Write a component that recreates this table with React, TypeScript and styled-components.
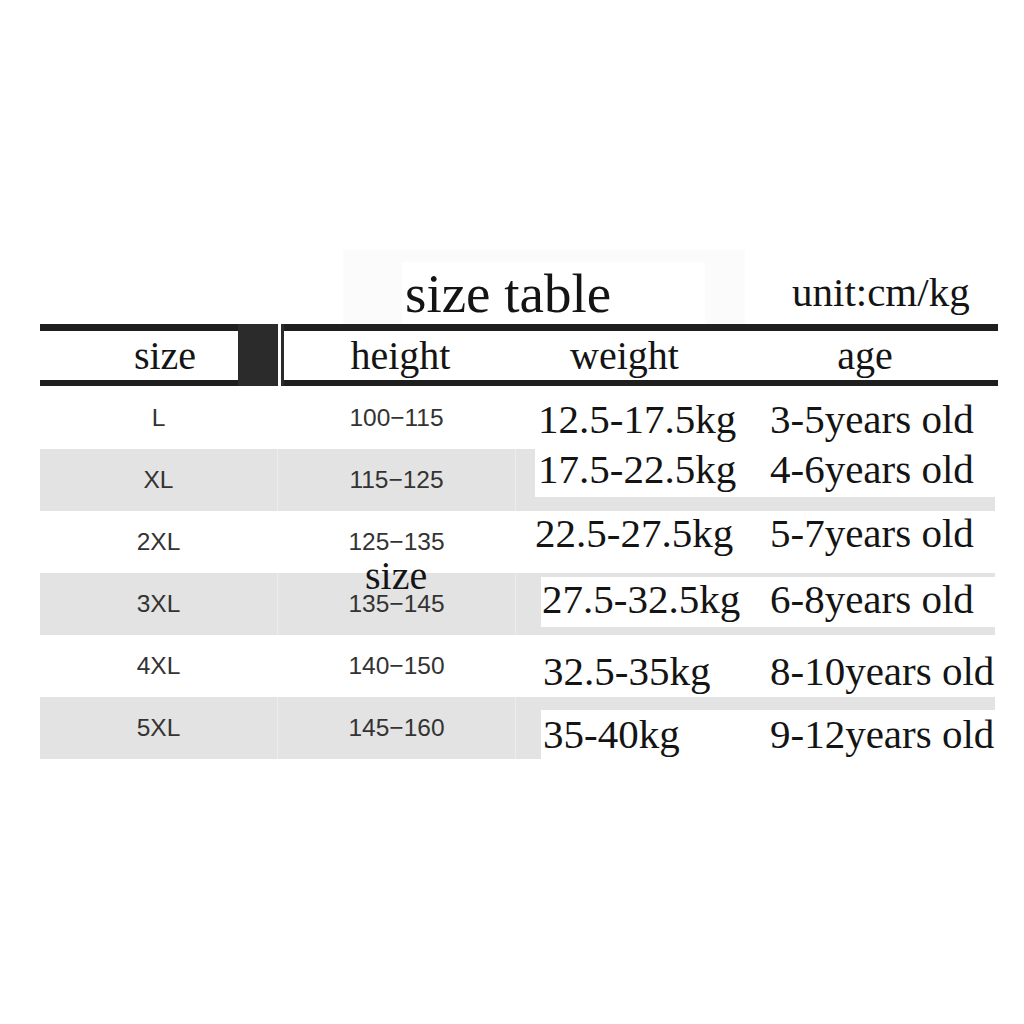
import React from 'react';
import styled, { createGlobalStyle } from 'styled-components';

// palette
const ink = '#141414';
const rule = '#1f1f1f';
const block = '#2b2b2b';
const band = '#e3e3e3';
const bandSeam = '#ececec';
const sansInk = '#333333';

const GlobalStyle = createGlobalStyle`
  html, body {
    margin: 0;
    padding: 0;
    background: #ffffff;
  }
`;

const Page = styled.div`
  width: 1024px;
  height: 1024px;
  background: #ffffff;
  overflow: hidden;
`;

const Sheet = styled.div`
  margin-left: 40px;
  padding-top: 250px;
  width: 958px;
`;

const TitleBar = styled.div`
  display: flex;
  height: 74px;
`;

const TitleBlock = styled.div`
  margin-left: 303px;
  width: 402px;
  height: 74px;
  background: #fbfbfb;
  display: flex;
  align-items: flex-end;
  padding-left: 59px;
  box-sizing: border-box;
`;

const TitleBox = styled.div`
  width: 303px;
  height: 62px;
  background: #ffffff;
  box-sizing: border-box;
  padding: 5px 0 0 3px;
  font-family: 'Liberation Serif', serif;
  font-size: 55px;
  line-height: 54px;
  color: ${ink};
`;

const Unit = styled.div`
  margin-left: 47px;
  padding-top: 22px;
  font-family: 'Liberation Serif', serif;
  font-size: 41px;
  line-height: 40px;
  color: ${ink};
`;

const HeaderRow = styled.div`
  display: grid;
  grid-template-columns: 198px 40px 3px 3px 233px 215px 1fr;
  border-top: 7px solid ${rule};
  border-bottom: 6px solid ${rule};
  height: 49px;
`;

const HeadCell = styled.div<{ $shift?: number }>`
  font-family: 'Liberation Serif', serif;
  font-size: 40px;
  line-height: 49px;
  color: ${ink};
  text-align: center;
  padding-left: ${p => p.$shift || 0}px;
`;

const DarkBlock = styled.div<{ $w?: boolean }>`
  background: ${p => (p.$w ? '#ffffff' : block)};
  margin: -7px 0 -6px;
`;

const Body = styled.div`
  position: relative;
  width: 955px;
`;

const Row = styled.div`
  display: grid;
  grid-template-columns: 238px 238px 1fr;
  height: 62px;
  &:first-child {
    margin-top: 1px;
  }
`;

const Cell = styled.div<{ $band: boolean; $seam?: boolean }>`
  display: flex;
  align-items: center;
  justify-content: center;
  background: ${p => (p.$band ? band : 'transparent')};
  border-right: 1px solid ${p => (p.$band && p.$seam ? bandSeam : 'transparent')};
  font-family: 'Liberation Sans', Arial, sans-serif;
  font-size: 24.5px;
  color: ${sansInk};
`;

const Tail = styled.div<{ $band: boolean }>`
  display: flex;
  background: ${p => (p.$band ? band : 'transparent')};
`;

const Patch = styled.div<{ $left: number; $top: number; $bottom: number }>`
  flex: 1;
  display: flex;
  margin: ${p => `${p.$top}px 0 ${p.$bottom}px ${p.$left}px`};
  background: #ffffff;
`;

const Weight = styled.div<{ $left: number; $pad: number; $width: number }>`
  width: ${p => p.$width}px;
  box-sizing: border-box;
  padding: ${p => `${p.$pad}px 0 0 ${p.$left}px`};
  font-family: 'Liberation Serif', serif;
  font-size: 41px;
  line-height: 40px;
  color: ${ink};
  white-space: nowrap;
`;

const Age = styled.div<{ $pad: number }>`
  padding-top: ${p => p.$pad}px;
  font-family: 'Liberation Serif', serif;
  font-size: 41px;
  line-height: 40px;
  color: ${ink};
  white-space: nowrap;
`;

const Stray = styled.div`
  position: absolute;
  left: 325px;
  top: 169px;
  font-family: 'Liberation Serif', serif;
  font-size: 40px;
  line-height: 40px;
  color: ${ink};
`;

type SizeRow = {
  size: string;
  height: string;
  weight: string;
  age: string;
  band: boolean;
  inset: number; // where the white patch starts inside the tail
  top: number;
  bottom: number;
  indent: number; // weight text indent inside patch
  pad: number; // text offset from patch top
};

const rows: SizeRow[] = [
  { size: 'L', height: '100\u2212115', weight: '12.5-17.5kg', age: '3-5years old', band: false, inset: 0, top: 0, bottom: 0, indent: 22, pad: 12 },
  { size: 'XL', height: '115\u2212125', weight: '17.5-22.5kg', age: '4-6years old', band: true, inset: 19, top: 0, bottom: 14, indent: 3, pad: 0 },
  { size: '2XL', height: '125\u2212135', weight: '22.5-27.5kg', age: '5-7years old', band: false, inset: 0, top: 0, bottom: 0, indent: 19, pad: 2 },
  { size: '3XL', height: '135\u2212145', weight: '27.5-32.5kg', age: '6-8years old', band: true, inset: 25, top: 4, bottom: 8, indent: 1, pad: 2 },
  { size: '4XL', height: '140\u2212150', weight: '32.5-35kg', age: '8-10years old', band: false, inset: 0, top: 0, bottom: 0, indent: 27, pad: 16 },
  { size: '5XL', height: '145\u2212160', weight: '35-40kg', age: '9-12years old', band: true, inset: 25, top: 13, bottom: 0, indent: 2, pad: 4 },
];

export default function App() {
  return (
    <Page>
      <GlobalStyle />
      <Sheet>
        <TitleBar>
          <TitleBlock>
            <TitleBox>size table</TitleBox>
          </TitleBlock>
          <Unit>unit:cm/kg</Unit>
        </TitleBar>
        <HeaderRow>
          <HeadCell $shift={52}>size</HeadCell>
          <DarkBlock />
          <DarkBlock $w />
          <DarkBlock />
          <HeadCell>height</HeadCell>
          <HeadCell>weight</HeadCell>
          <HeadCell>age</HeadCell>
        </HeaderRow>
        <Body>
          {rows.map(r => (
            <Row key={r.size}>
              <Cell $band={r.band} $seam>{r.size}</Cell>
              <Cell $band={r.band} $seam>{r.height}</Cell>
              <Tail $band={r.band}>
                <Patch $left={r.inset} $top={r.top} $bottom={r.bottom}>
                  <Weight $left={r.indent} $pad={r.pad} $width={254 - r.inset}>
                    {r.weight}
                  </Weight>
                  <Age $pad={r.pad}>{r.age}</Age>
                </Patch>
              </Tail>
            </Row>
          ))}
          <Stray>size</Stray>
        </Body>
      </Sheet>
    </Page>
  );
}
